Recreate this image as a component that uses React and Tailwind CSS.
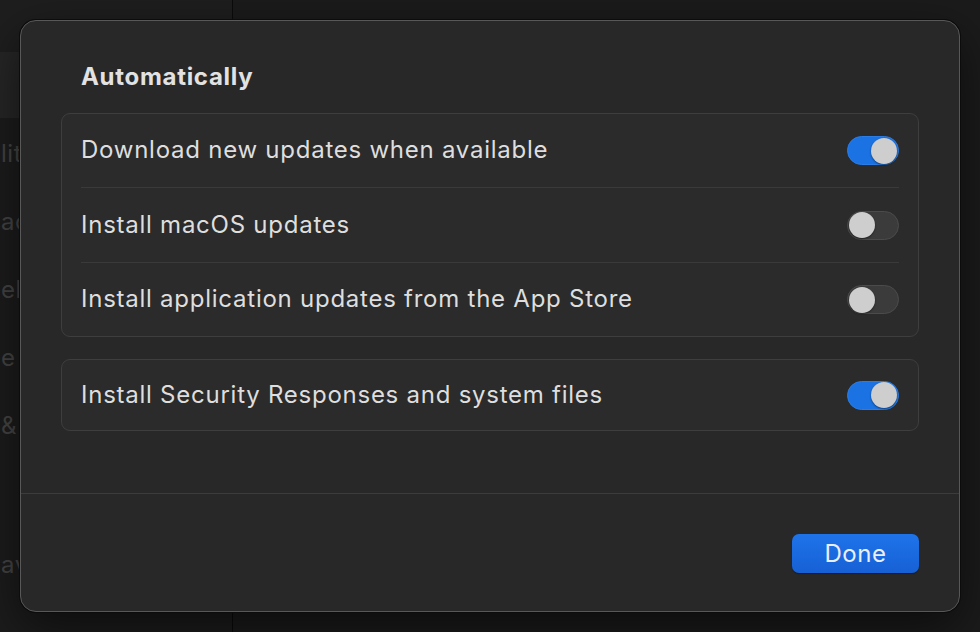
import React, { useState } from 'react';

const FONT = { fontFamily: 'Inter, "Noto Sans", sans-serif' };

const SIDEBAR_BITS = [
  { text: 'lit', top: 'mt-[142px]' },
  { text: 'ac', top: 'mt-[44px]' },
  { text: 'ell', top: 'mt-[44px]' },
  { text: 'e', top: 'mt-[44px]' },
  { text: '&', top: 'mt-[44px]' },
  { text: 'av', top: 'mt-[115px]' },
];

function Toggle({ on, onChange }) {
  return (
    <button
      onClick={onChange}
      className={`relative w-[52px] h-[29px] rounded-full border flex items-center px-[1px] ${
        on ? 'bg-[#1b72e2] border-[#2a7de6] justify-end' : 'bg-[#3b3b3b] border-[#4b4b4b] justify-start'
      }`}
    >
      <span className="w-[26px] h-[26px] rounded-full bg-[#cecece] shadow-[0_1px_2px_rgba(0,0,0,0.45)]" />
    </button>
  );
}

function Row({ label, on, onChange, h }) {
  return (
    <div className={`flex items-center justify-between pl-[19px] pr-[19px] ${h}`}>
      <span className="text-[24px] leading-[28px] text-[#dedede] tracking-[0.75px] -mt-[1px]">{label}</span>
      <Toggle on={on} onChange={onChange} />
    </div>
  );
}

export default function App() {
  const [opts, setOpts] = useState({ download: true, macos: false, apps: false, security: true });
  const flip = (k) => setOpts((p) => ({ ...p, [k]: !p[k] }));

  return (
    <div style={FONT} className="relative w-[980px] h-[632px] overflow-hidden bg-[#1a1a1a] flex">
      {/* settings window behind the sheet */}
      <aside className="w-[233px] h-full bg-[#1c1c1c] border-r border-[#0b0b0b] flex flex-col">
        <div className="h-[52px] bg-[#1e1e1e]" />
        <div className="h-[66px] bg-[#262626]" />
        <div className="flex flex-col text-[24px] tracking-[0.5px] text-[#444444] -mt-[118px]">
          {SIDEBAR_BITS.map((b) => (
            <span key={b.text} className={`${b.top} leading-[24px] pl-[1px]`}>{b.text}</span>
          ))}
        </div>
      </aside>
      <main className="flex-1 bg-[#1b1b1b]" />

      {/* sheet */}
      <div className="absolute left-[20px] top-[20px] w-[940px] h-[592px] rounded-[16px] bg-[#282828] border border-[#585858] shadow-[0_0_0_1px_#0c0c0c,0_16px_48px_rgba(0,0,0,0.55)] flex flex-col">
        <div className="px-10 pt-[42px]">
          <h2 className="pl-5 text-[24px] leading-[28px] font-bold tracking-[0.7px] text-[#e2e2e2]">Automatically</h2>

          <div className="mt-[22px] rounded-[9px] border border-[#3e3e3e] bg-[#2b2b2b] h-[224px] flex flex-col">
            <Row label="Download new updates when available" on={opts.download} onChange={() => flip('download')} h="h-[73px]" />
            <div className="mx-[19px] h-px bg-[#3a3a3a]" />
            <Row label="Install macOS updates" on={opts.macos} onChange={() => flip('macos')} h="h-[74px]" />
            <div className="mx-[19px] h-px bg-[#3a3a3a]" />
            <Row label="Install application updates from the App Store" on={opts.apps} onChange={() => flip('apps')} h="h-[73px]" />
          </div>

          <div className="mt-[22px] rounded-[9px] border border-[#3e3e3e] bg-[#2b2b2b] h-[72px] flex flex-col justify-center">
            <Row label="Install Security Responses and system files" on={opts.security} onChange={() => flip('security')} h="h-[70px]" />
          </div>
        </div>

        <div className="mt-[62px] h-px bg-[#3c3c3c]" />

        <div className="flex justify-end px-10 pt-[40px]">
          <button className="w-[127px] h-[39px] rounded-[7px] bg-gradient-to-b from-[#1f74ea] to-[#1660d4] shadow-[0_1px_1px_rgba(0,0,0,0.4)] text-[24px] tracking-[0.5px] text-[#e9effb]">
            Done
          </button>
        </div>
      </div>
    </div>
  );
}
